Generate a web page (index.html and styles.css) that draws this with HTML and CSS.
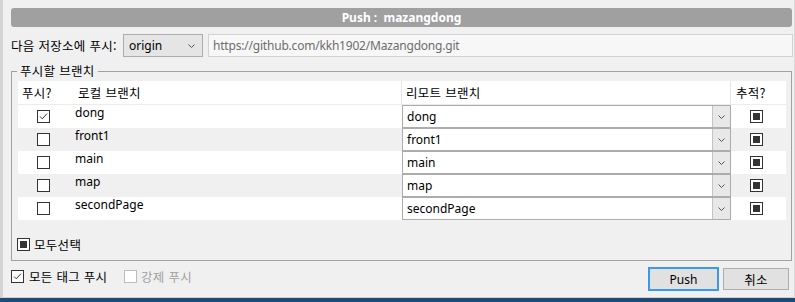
FILE: index.html
```html
<!DOCTYPE html>
<html lang="ko">
<head>
<meta charset="utf-8">
<title>Push</title>
<link rel="stylesheet" href="styles.css">
</head>
<body>
<div class="window">
  <div class="titlebar">Push :&nbsp; mazangdong</div>

  <div class="repo-row">
    <span class="repo-label ko">다음 저장소에 푸시:</span>
    <div class="select"><span>origin</span><svg class="chev" width="7" height="4" viewBox="0 0 7 4"><path d="M0.5 0.5 L3.5 3.5 L6.5 0.5"/></svg></div>
    <div class="url">https://github.com/kkh1902/Mazangdong.git</div>
  </div>

  <div class="group">
    <div class="legend ko">푸시할 브랜치</div>
    <div class="table">
      <div class="thead">
        <div class="h h-push ko">푸시?</div>
        <div class="h h-local ko">로컬 브랜치</div>
        <div class="h h-remote ko">리모트 브랜치</div>
        <div class="h h-track ko">추적?</div>
      </div>

      <div class="row">
        <div class="c-push"><span class="cb checked"><svg width="11" height="11" viewBox="0 0 11 11"><path d="M2 5.5 L4.3 7.8 L9 2.6"/></svg></span></div>
        <div class="c-local">dong</div>
        <div class="c-remote"><div class="combo"><span class="combo-text">dong</span><span class="combo-btn"><svg class="chev" width="7" height="4" viewBox="0 0 7 4"><path d="M0.5 0.5 L3.5 3.5 L6.5 0.5"/></svg></span></div></div>
        <div class="c-track"><span class="cb ind"></span></div>
      </div>

      <div class="row alt">
        <div class="c-push"><span class="cb"></span></div>
        <div class="c-local">front1</div>
        <div class="c-remote"><div class="combo"><span class="combo-text">front1</span><span class="combo-btn"><svg class="chev" width="7" height="4" viewBox="0 0 7 4"><path d="M0.5 0.5 L3.5 3.5 L6.5 0.5"/></svg></span></div></div>
        <div class="c-track"><span class="cb ind"></span></div>
      </div>

      <div class="row">
        <div class="c-push"><span class="cb"></span></div>
        <div class="c-local">main</div>
        <div class="c-remote"><div class="combo"><span class="combo-text">main</span><span class="combo-btn"><svg class="chev" width="7" height="4" viewBox="0 0 7 4"><path d="M0.5 0.5 L3.5 3.5 L6.5 0.5"/></svg></span></div></div>
        <div class="c-track"><span class="cb ind"></span></div>
      </div>

      <div class="row alt">
        <div class="c-push"><span class="cb"></span></div>
        <div class="c-local">map</div>
        <div class="c-remote"><div class="combo"><span class="combo-text">map</span><span class="combo-btn"><svg class="chev" width="7" height="4" viewBox="0 0 7 4"><path d="M0.5 0.5 L3.5 3.5 L6.5 0.5"/></svg></span></div></div>
        <div class="c-track"><span class="cb ind"></span></div>
      </div>

      <div class="row">
        <div class="c-push"><span class="cb"></span></div>
        <div class="c-local">secondPage</div>
        <div class="c-remote"><div class="combo"><span class="combo-text">secondPage</span><span class="combo-btn"><svg class="chev" width="7" height="4" viewBox="0 0 7 4"><path d="M0.5 0.5 L3.5 3.5 L6.5 0.5"/></svg></span></div></div>
        <div class="c-track"><span class="cb ind"></span></div>
      </div>
    </div>

    <div class="select-all">
      <span class="cb ind"></span><span class="ko lbl">모두선택</span>
    </div>
  </div>

  <div class="footer">
    <div class="opt opt-tags"><span class="cb checked"><svg width="11" height="11" viewBox="0 0 11 11"><path d="M2 5.5 L4.3 7.8 L9 2.6"/></svg></span><span class="ko lbl">모든 태그 푸시</span></div>
    <div class="opt opt-force disabled"><span class="cb"></span><span class="ko lbl">강제 푸시</span></div>
    <div class="btn btn-push">Push</div>
    <div class="btn btn-cancel ko">취소</div>
  </div>
</div>
<div class="taskbar"></div>
</body>
</html>
```

FILE: styles.css
```css
* { box-sizing: border-box; }
html, body { margin: 0; padding: 0; }
body {
  width: 795px;
  height: 302px;
  overflow: hidden;
  background: #f0f0f0;
  font-family: "Noto Sans", "Noto Sans CJK KR", sans-serif;
  font-size: 12px;
  color: #000;
}
.ko {
  font-family: "Noto Sans CJK KR", "Noto Sans", sans-serif;
  font-size: 12.5px;
  letter-spacing: 0.3px;
}
.window {
  height: 298px;
  border-left: 3px solid #d4d4d4;
  border-right: 1px solid #dadada;
  border-bottom: 1px solid #cfcfcf;
  padding: 8px 2px 0 8px;
  display: flex;
  flex-direction: column;
}
.taskbar { height: 4px; background: #1d4b76; }

.titlebar {
  height: 19px;
  background: #a0a0a0;
  border-radius: 3px;
  color: #fff;
  font-weight: bold;
  line-height: 19px;
  text-align: center;
  white-space: pre;
}

.repo-row {
  margin-top: 7px;
  height: 23px;
  display: flex;
  align-items: center;
}
.repo-label { width: 112px; white-space: nowrap; }
.select {
  width: 80px;
  height: 23px;
  border: 1px solid #adadad;
  background: #e5e5e5;
  display: flex;
  align-items: center;
  justify-content: space-between;
  padding: 0 7px 0 5px;
}
.chev path { fill: none; stroke: #555; stroke-width: 1; }
.url {
  flex: 1;
  height: 23px;
  margin-left: 5px;
  margin-right: -1px;
  border: 1px solid #d2d2d2;
  background: #f7f7f7;
  color: #6d6d6d;
  padding-left: 4px;
  display: flex;
  align-items: center;
  letter-spacing: -0.2px;
}

.group {
  position: relative;
  margin-top: 14px;
  border: 1px solid #a0a0a0;
  padding: 9px 5px 6px 6px;
}
.legend {
  position: absolute;
  top: -9px;
  left: 5px;
  padding: 0 3px;
  line-height: 16px;
  background: #f0f0f0;
}
.table { background: #fff; }
.thead, .row {
  display: grid;
  grid-template-columns: 57px 327px 329px 55px;
}
.thead { height: 24px; border-bottom: 1px solid #ececec; }
.h { display: flex; align-items: center; white-space: nowrap; }
.h-push { padding-left: 4px; }
.h-local { padding-left: 3px; border-right: 1px solid #e5e5e5; }
.h-remote { padding-left: 4px; border-right: 1px solid #e5e5e5; }
.h-track { padding-left: 5px; }

.row { height: 23px; background: #fff; }
.row.alt { background: #f0f0f0; }
.c-push, .c-track { display: flex; align-items: center; padding-left: 19px; }
.c-local { line-height: 16px; padding-top: 0; }

.cb {
  width: 13px;
  height: 13px;
  border: 1px solid #333;
  background: #fff;
  display: inline-flex;
  align-items: center;
  justify-content: center;
  flex: none;
}
.cb svg path { fill: none; stroke: #333; stroke-width: 1; }
.cb.ind::after {
  content: "";
  width: 7px;
  height: 7px;
  background: #333;
}

.combo {
  height: 23px;
  border: 1px solid #acacac;
  background: #fff;
  display: flex;
  align-items: center;
}
.combo-text { flex: 1; padding-left: 4px; }
.combo-btn {
  width: 18px;
  height: 100%;
  border-left: 1px solid #c4c4c4;
  background: #e8e8e8;
  display: flex;
  align-items: center;
  justify-content: center;
}

.select-all {
  margin-top: 14px;
  height: 20px;
  display: flex;
  align-items: center;
  margin-left: -1px;
}
.select-all .lbl { margin-left: 4px; }

.footer {
  margin-top: 6px;
  height: 24px;
  display: flex;
  align-items: flex-start;
}
.opt {
  height: 19px;
  display: flex;
  align-items: center;
}
.opt-tags { width: 113px; }
.opt-tags .lbl { margin-left: 5px; }
.opt-force .lbl { margin-left: 4px; }
.disabled { color: #a0a0a0; }
.disabled .cb { border-color: #bcbcbc; }

.btn {
  display: flex;
  align-items: center;
  justify-content: center;
  background: #e1e1e1;
}
.btn-push {
  margin-left: auto;
  width: 71px;
  height: 24px;
  border: 2px solid #3c98ec;
}
.btn-cancel {
  margin-left: 4px;
  margin-right: 3px;
  margin-top: 1px;
  width: 66px;
  height: 22px;
  border: 1px solid #adadad;
}
```
